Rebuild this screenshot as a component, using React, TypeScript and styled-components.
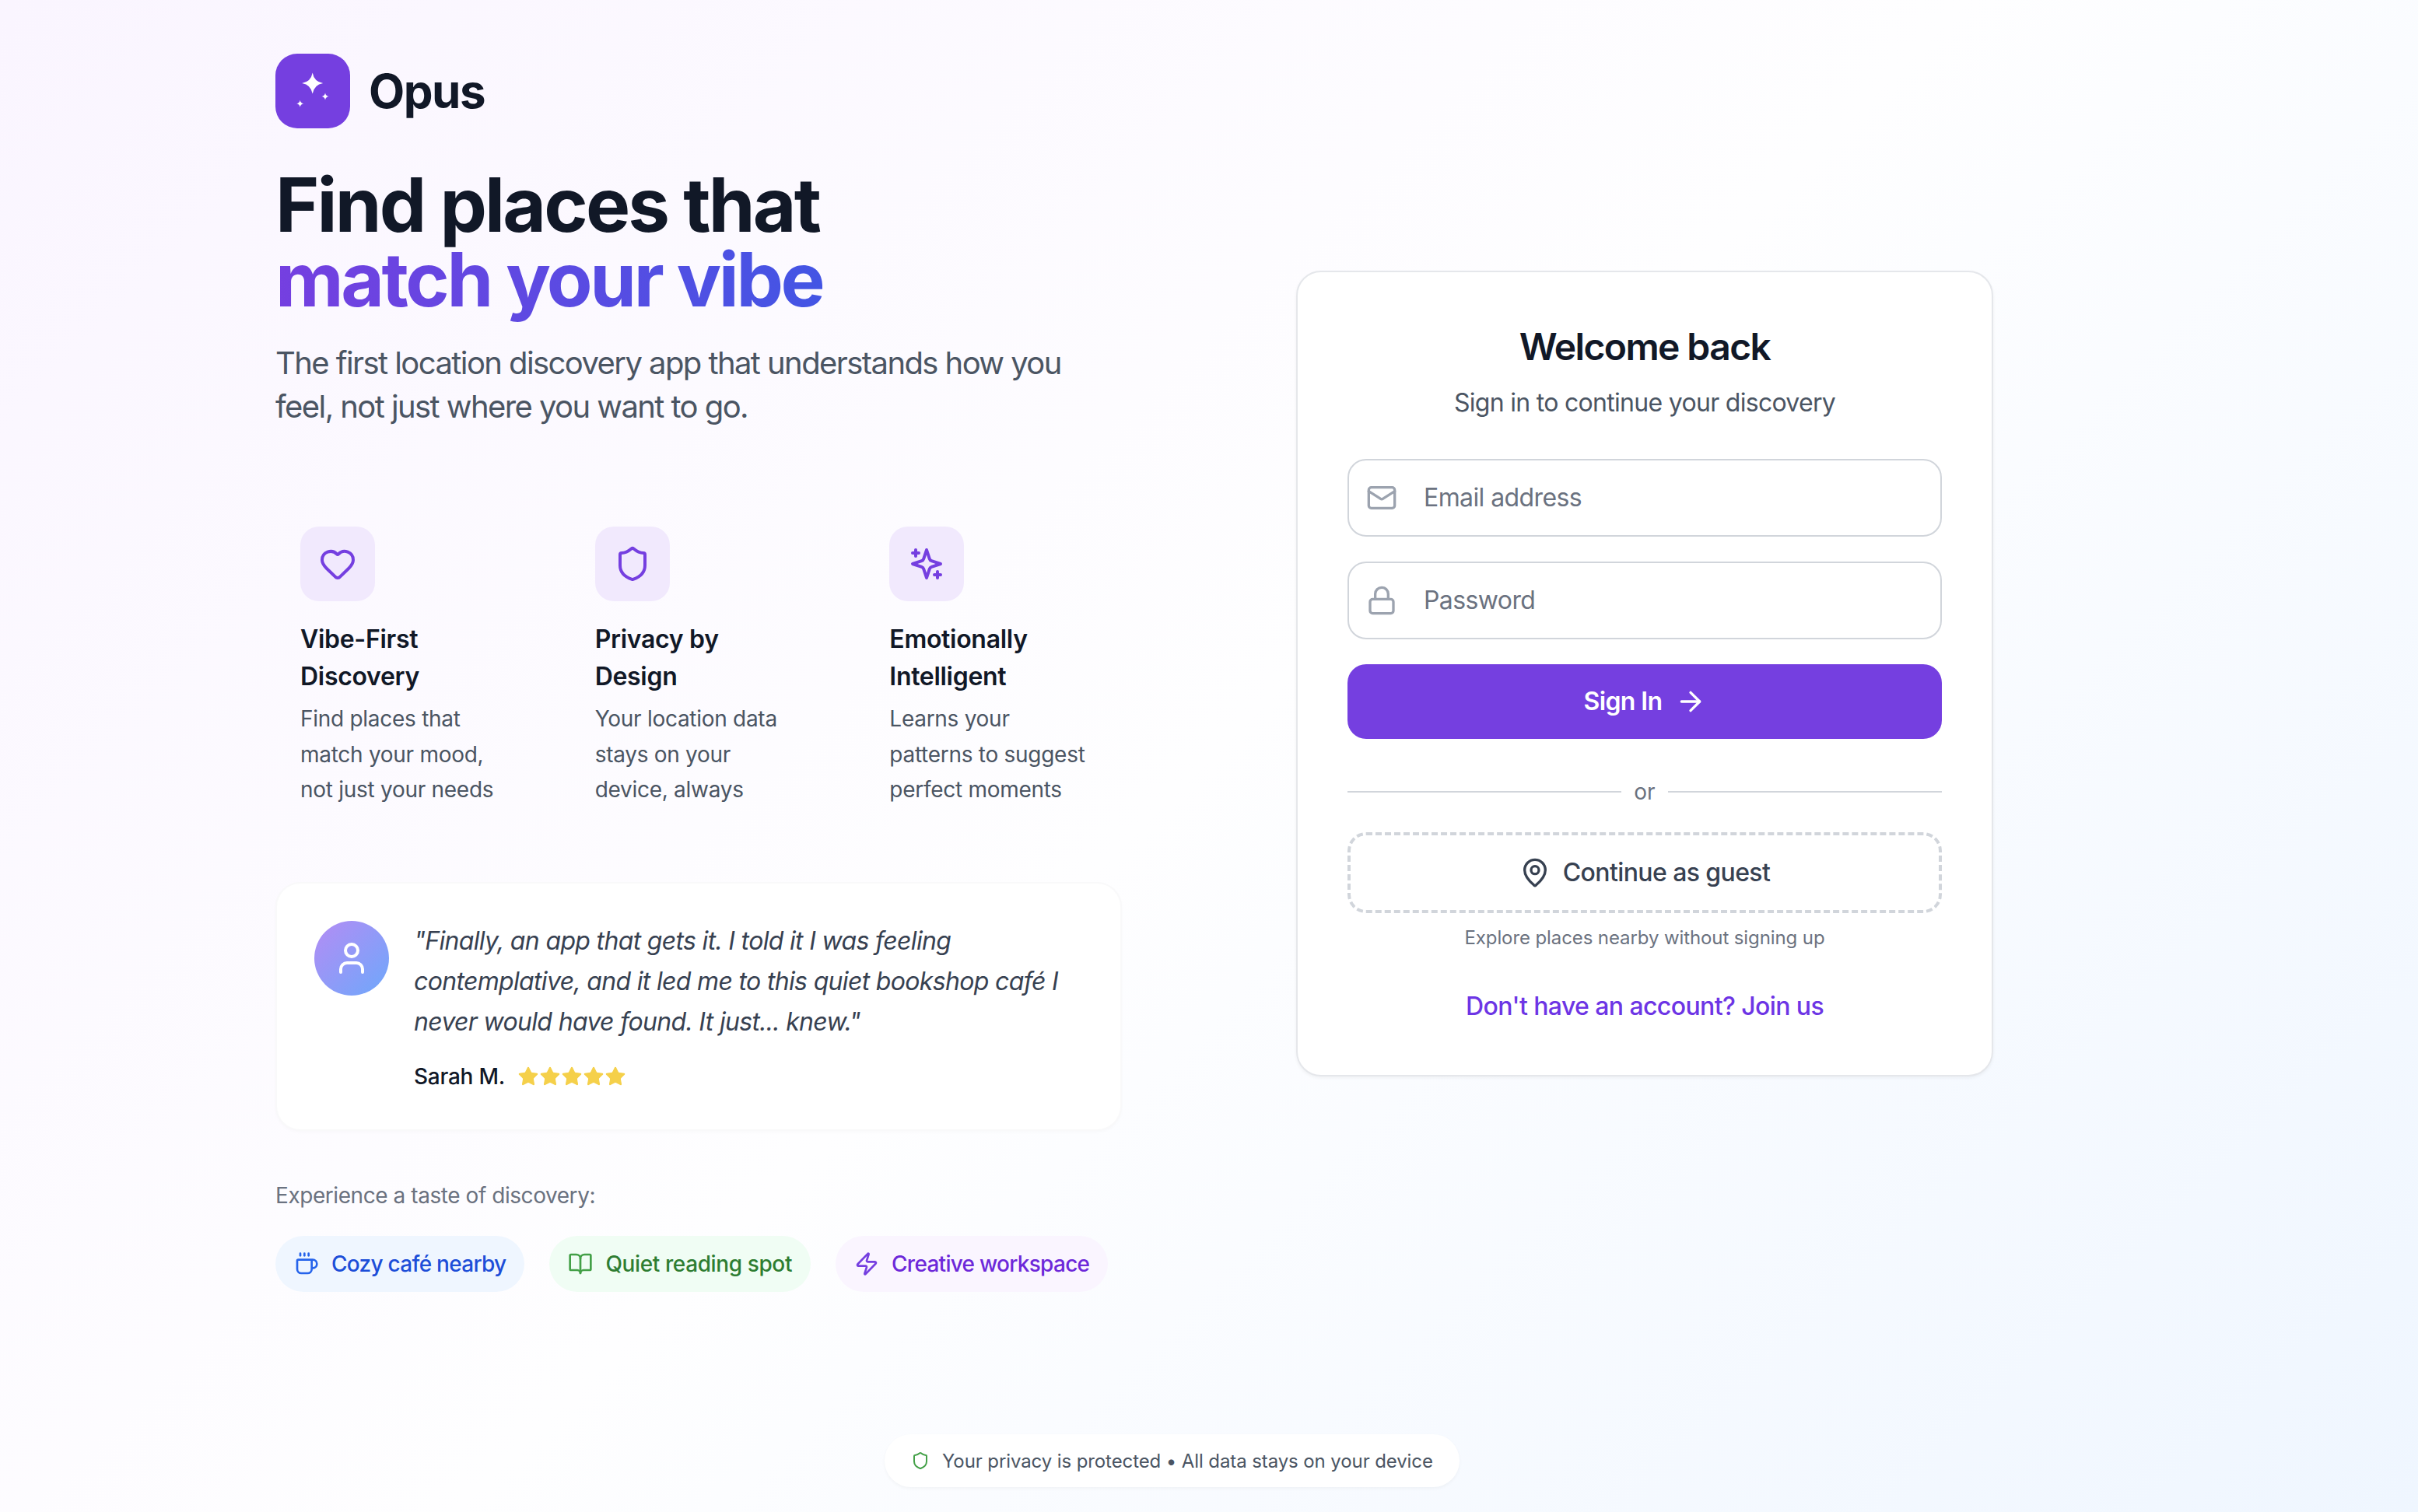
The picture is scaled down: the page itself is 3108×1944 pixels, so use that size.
import React from "react";
import styled, { createGlobalStyle } from "styled-components";
import {
  ArrowRight,
  BookOpen,
  Coffee,
  Heart,
  Lock,
  Mail,
  MapPin,
  Shield,
  Star,
  User,
  Zap,
} from "lucide-react";

const GlobalStyle = createGlobalStyle`
  * {
    box-sizing: border-box;
  }
  html,
  body {
    margin: 0;
    padding: 0;
  }
  body {
    font-family: Inter, "Liberation Sans", sans-serif;
    color: #111827;
  }
`;

const SparklesIcon = () => (
  <svg width="48" height="48" viewBox="0 0 24 24" fill="none" stroke="#753fe0" strokeWidth="2" strokeLinecap="round" strokeLinejoin="round">
    <path d="m12 3-1.912 5.813a2 2 0 0 1-1.275 1.275L3 12l5.813 1.912a2 2 0 0 1 1.275 1.275L12 21l1.912-5.813a2 2 0 0 1 1.275-1.275L21 12l-5.813-1.912a2 2 0 0 1-1.275-1.275L12 3Z" />
    <path d="M5 3v4" />
    <path d="M19 17v4" />
    <path d="M3 5h4" />
    <path d="M17 19h4" />
  </svg>
);

const LogoStars = () => (
  <svg width="96" height="96" viewBox="0 0 96 96" fill="#fff">
    <path d="M47.700 24.500Q49.700 36 61.200 38 49.700 40 47.700 51.500 45.700 40 34.200 38 45.700 36 47.700 24.500Z" />
    <path d="M64 50.500Q64.600 54.400 68.500 55 64.600 55.600 64 59.500 63.400 55.600 59.500 55 63.400 54.400 64 50.500Z" />
    <path d="M31.700 59.800Q32.300 63.700 36.200 64.300 32.300 64.900 31.700 68.800 31.100 64.900 27.200 64.300 31.100 63.700 31.700 59.800Z" />
  </svg>
);

const features = [
  {
    icon: <Heart size={48} />,
    title: "Vibe-First Discovery",
    text: "Find places that match your mood, not just your needs",
  },
  {
    icon: <Shield size={48} />,
    title: "Privacy by Design",
    text: "Your location data stays on your device, always",
  },
  {
    icon: <SparklesIcon />,
    title: "Emotionally Intelligent",
    text: "Learns your patterns to suggest perfect moments",
  },
];

const chips = [
  { icon: <Coffee size={32} />, label: "Cozy café nearby", bg: "#eff6ff", fg: "#1d4ed8", stroke: "#2563eb", tracking: -0.72 },
  { icon: <BookOpen size={32} />, label: "Quiet reading spot", bg: "#f0fdf4", fg: "#2e7d32", stroke: "#43a047", tracking: -0.39 },
  { icon: <Zap size={32} />, label: "Creative workspace", bg: "#faf5ff", fg: "#6d28d9", stroke: "#753fe0", tracking: -0.72 },
];

export default function App() {
  return (
    <Page>
      <GlobalStyle />
      <Row>
        <LeftColumn>
          <Brand>
            <LogoBox>
              <LogoStars />
            </LogoBox>
            <BrandName>Opus</BrandName>
          </Brand>
          <Headline>
            Find places that
            <br />
            <HeadlineAccent>match your vibe</HeadlineAccent>
          </Headline>
          <Lead>The first location discovery app that understands how you feel, not just where you want to go.</Lead>
          <FeatureGrid>
            {features.map((f) => (
              <Feature key={f.title}>
                <FeatureIcon>{f.icon}</FeatureIcon>
                <FeatureTitle>{f.title}</FeatureTitle>
                <FeatureText>{f.text}</FeatureText>
              </Feature>
            ))}
          </FeatureGrid>
          <Testimonial>
            <Avatar>
              <User size={48} color="#fff" />
            </Avatar>
            <div>
              <Quote>"Finally, an app that gets it. I told it I was feeling contemplative, and it led me to this quiet bookshop café I never would have found. It just... knew."</Quote>
              <Author>
                <AuthorName>Sarah M.</AuthorName>
                <Stars>
                  {[0, 1, 2, 3, 4].map((i) => (
                    <Star key={i} size={28} fill="#f5d04a" color="#f5d04a" strokeWidth={1} />
                  ))}
                </Stars>
              </Author>
            </div>
          </Testimonial>
          <TasteLabel>Experience a taste of discovery:</TasteLabel>
          <ChipRow>
            {chips.map((c) => (
              <Chip key={c.label} $bg={c.bg} $fg={c.fg} $stroke={c.stroke} $tracking={c.tracking}>
                {c.icon}
                {c.label}
              </Chip>
            ))}
          </ChipRow>
        </LeftColumn>

        <SignInCard>
          <CardTitle>Welcome back</CardTitle>
          <CardSubtitle>Sign in to continue your discovery</CardSubtitle>
          <Fields>
            <Field>
              <FieldIcon>
                <Mail size={40} />
              </FieldIcon>
              <Input type="email" placeholder="Email address" />
            </Field>
            <Field>
              <FieldIcon>
                <Lock size={40} />
              </FieldIcon>
              <Input type="password" placeholder="Password" />
            </Field>
          </Fields>
          <SignInButton>
            Sign In
            <ArrowRight size={40} />
          </SignInButton>
          <Divider>
            <DividerText>or</DividerText>
          </Divider>
          <GuestButton>
            <MapPin size={40} />
            Continue as guest
          </GuestButton>
          <GuestHint>Explore places nearby without signing up</GuestHint>
          <JoinLink>Don't have an account? Join us</JoinLink>
        </SignInCard>
      </Row>

      <PrivacyPill>
        <Shield size={24} color="#43a047" />
        Your privacy is protected • All data stays on your device
      </PrivacyPill>
    </Page>
  );
}

const Page = styled.div`
  position: relative;
  width: 3108px;
  height: 1944px;
  padding: 69px 0 0 354px;
  background: linear-gradient(135deg, #faf5ff 0%, #fefeff 50%, #eff6ff 100%);
  overflow: hidden;
`;

const Row = styled.div`
  display: flex;
  align-items: center;
  gap: 224px;
`;

const LeftColumn = styled.div`
  width: 1088px;
  flex-shrink: 0;
`;

const Brand = styled.div`
  display: flex;
  align-items: center;
  gap: 24px;
  margin-bottom: 50px;
`;

const LogoBox = styled.div`
  width: 96px;
  height: 96px;
  border-radius: 28px;
  background: #753fe0;
  display: flex;
`;

const BrandName = styled.span`
  font-size: 60px;
  line-height: 80px;
  font-weight: 700;
  color: #111827;
  letter-spacing: -1.5px;
`;

const Headline = styled.h1`
  margin: 0 0 32px;
  font-size: 96px;
  line-height: 96px;
  font-weight: 700;
  letter-spacing: -2.8px;
  color: #111827;
`;

const HeadlineAccent = styled.span`
  background: linear-gradient(90deg, #753fe0, #4355e4);
  -webkit-background-clip: text;
  background-clip: text;
  color: transparent;
  letter-spacing: -3.4px;
`;

const Lead = styled.p`
  margin: 0 0 94px;
  font-size: 40px;
  line-height: 56px;
  letter-spacing: -1.58px;
  color: #4b5563;
`;

const FeatureGrid = styled.div`
  display: grid;
  grid-template-columns: repeat(3, 1fr);
  gap: 48px;
  margin-bottom: 63px;
`;

const Feature = styled.div`
  padding: 32px;
`;

const FeatureIcon = styled.div`
  width: 96px;
  height: 96px;
  border-radius: 24px;
  background: #f1e9fd;
  color: #753fe0;
  display: flex;
  align-items: center;
  justify-content: center;
  margin-bottom: 25px;
`;

const FeatureTitle = styled.h3`
  margin: 0 0 8px;
  font-size: 32px;
  line-height: 48px;
  font-weight: 600;
  letter-spacing: -0.3px;
  color: #111827;
`;

const FeatureText = styled.p`
  margin: 0;
  font-size: 28px;
  line-height: 45.5px;
  letter-spacing: -0.28px;
  color: #4b5563;
`;

const Testimonial = styled.div`
  display: flex;
  gap: 32px;
  padding: 48px;
  background: #fff;
  border: 2px solid rgba(243, 244, 246, 0.5);
  border-radius: 32px;
  box-shadow: 0 2px 4px rgba(0, 0, 0, 0.02);
  margin-bottom: 63px;
`;

const Avatar = styled.div`
  width: 96px;
  height: 96px;
  flex-shrink: 0;
  border-radius: 50%;
  background: linear-gradient(135deg, #b48cf4, #6ea8fb);
  display: flex;
  align-items: center;
  justify-content: center;
`;

const Quote = styled.p`
  margin: 0 0 24px;
  font-size: 32px;
  line-height: 52px;
  font-style: italic;
  letter-spacing: -0.67px;
  color: #374151;
`;

const Author = styled.div`
  display: flex;
  align-items: center;
  gap: 16px;
`;

const AuthorName = styled.span`
  font-size: 28px;
  line-height: 40px;
  font-weight: 500;
  letter-spacing: -0.25px;
  color: #111827;
`;

const Stars = styled.div`
  display: flex;
`;

const TasteLabel = styled.p`
  margin: 0 0 32px;
  font-size: 28px;
  line-height: 40px;
  letter-spacing: -0.44px;
  color: #6b7280;
`;

const ChipRow = styled.div`
  display: flex;
  gap: 32px;
`;

const Chip = styled.div<{ $bg: string; $fg: string; $stroke: string; $tracking: number }>`
  height: 72px;
  padding: 0 24px;
  display: flex;
  align-items: center;
  gap: 16px;
  border-radius: 36px;
  font-size: 28px;
  font-weight: 500;
  letter-spacing: ${(p) => p.$tracking}px;
  white-space: nowrap;
  background: ${(p) => p.$bg};
  color: ${(p) => p.$fg};

  svg {
    color: ${(p) => p.$stroke};
  }
`;

const SignInCard = styled.div`
  width: 896px;
  flex-shrink: 0;
  margin-top: 2px;
  padding: 64px;
  background: #fff;
  border: 2px solid #e5e7eb;
  border-radius: 32px;
  box-shadow: 0 2px 4px rgba(0, 0, 0, 0.05);
  display: flex;
  flex-direction: column;
  text-align: center;
`;

const CardTitle = styled.h2`
  margin: 0 0 16px;
  font-size: 48px;
  line-height: 64px;
  font-weight: 600;
  letter-spacing: -1.6px;
  color: #111827;
`;

const CardSubtitle = styled.p`
  margin: 0 0 48px;
  font-size: 32px;
  line-height: 48px;
  letter-spacing: -0.7px;
  color: #4b5563;
`;

const Fields = styled.div`
  display: flex;
  flex-direction: column;
  gap: 32px;
  margin-bottom: 32px;
`;

const Field = styled.div`
  position: relative;
`;

const FieldIcon = styled.span`
  position: absolute;
  left: 24px;
  top: 30px;
  display: flex;
  color: #9ca3af;
`;

const Input = styled.input`
  display: block;
  width: 100%;
  height: 100px;
  padding: 0 32px 0 96px;
  border: 2px solid #d1d5db;
  border-radius: 24px;
  background: #fff;
  font-family: inherit;
  font-size: 32px;
  letter-spacing: -0.6px;
  color: #111827;
  outline: none;

  &::placeholder {
    color: #6b7280;
    opacity: 1;
  }
`;

const SignInButton = styled.button`
  height: 96px;
  border: 0;
  border-radius: 24px;
  background: #753fe0;
  color: #fff;
  font-family: inherit;
  font-size: 32px;
  font-weight: 600;
  letter-spacing: -0.6px;
  display: flex;
  align-items: center;
  justify-content: center;
  gap: 16px;
`;

const Divider = styled.div`
  margin: 48px 0 32px;
  display: flex;
  align-items: center;

  &::before,
  &::after {
    content: "";
    flex: 1;
    height: 2px;
    background: #d1d5db;
  }
`;

const DividerText = styled.span`
  padding: 0 16px;
  font-size: 28px;
  line-height: 40px;
  color: #6b7280;
`;

const GuestButton = styled.button`
  height: 104px;
  border: 4px dashed #d1d5db;
  border-radius: 24px;
  background: transparent;
  color: #374151;
  font-family: inherit;
  font-size: 32px;
  font-weight: 500;
  letter-spacing: -0.6px;
  display: flex;
  align-items: center;
  justify-content: center;
  gap: 16px;
`;

const GuestHint = styled.p`
  margin: 16px 0 48px;
  font-size: 24px;
  line-height: 32px;
  letter-spacing: -0.1px;
  color: #6b7280;
`;

const JoinLink = styled.a`
  font-size: 32px;
  line-height: 48px;
  font-weight: 500;
  letter-spacing: -0.6px;
  color: #6d35e5;
`;

const PrivacyPill = styled.div`
  position: absolute;
  left: 1137px;
  bottom: 32px;
  height: 68px;
  padding: 0 34px;
  display: flex;
  align-items: center;
  gap: 16px;
  background: #fff;
  border-radius: 34px;
  box-shadow: 0 2px 4px rgba(0, 0, 0, 0.04);
  font-size: 24px;
  letter-spacing: -0.1px;
  color: #4b5563;
`;
